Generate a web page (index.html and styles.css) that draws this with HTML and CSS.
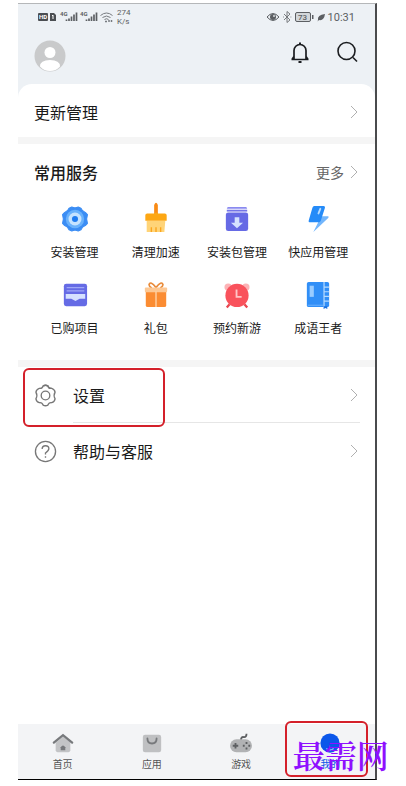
FILE: index.html
```
<!DOCTYPE html>
<html lang="zh-CN">
<head>
    <meta charset="UTF-8">
    <meta name="viewport" content="width=device-width, initial-scale=1.0">
    <title>我的</title>
    <link rel="stylesheet" href="styles.css">
</head>
<body>

<div class="phone">
    <header class="top">
        <div class="status">
            <div class="status-left">
                <svg width="79" height="16" viewBox="0 0 79 16">
                    <rect x="0" y="4" width="10" height="8" rx="1" fill="#4b4e52"/>
                    <text x="1" y="10" font-size="6" font-weight="700" fill="#fff">HD</text>
                    <path d="M12 4h4l2 2v6h-6z" fill="#4b4e52"/>
                    <path d="M14 7l1-1v4" fill="none" stroke="#fff"/>
                    <text x="22" y="7" font-size="6" font-weight="700" fill="#5c5f63">4G</text>
                    <path d="M28.5 12v-1.500M31 12V9.500M33.500 12V7.500M36 12V5.500M38.500 12V3.500" fill="none" stroke="#5c5f63" stroke-width="1.7"/>
                    <text x="42" y="7" font-size="6" font-weight="700" fill="#5c5f63">4G</text>
                    <path d="M48.500 12v-1.500M51 12V9.500M53.500 12V7.500M56 12V5.500M58.500 12V3.500" fill="none" stroke="#5c5f63" stroke-width="1.7"/>
                    <g fill="none" stroke="#777b80">
                        <path d="M62.5 6.500q6-5 12 0M64.500 8.500q4-3 8 0M66.500 10.500q2-1.500 4 0"/>
                        <path d="M67 12.500h2M71 11v2M73.500 11v2" stroke-width="1.5"/>
                    </g>
                </svg>
                <span class="speed">274<br>K/s</span>
            </div>
            <div class="status-right">
                <svg width="59" height="16" viewBox="0 0 59 16">
                    <path d="M0 8q6-7 12 0-6 7-12 0z" fill="none" stroke="#5c5f63"/>
                    <circle cx="6" cy="8" r="3" fill="#5c5f63"/>
                    <circle cx="7" cy="7" r="1" fill="#d8dcdf"/>
                    <path d="M17 5l6 6-3 2.500v-11L23 5l-6 6M16 8h.8M23.500 8h.8" fill="none" stroke="#6b6e72" stroke-width=".9"/>
                    <rect x="28.5" y="3.5" width="15" height="9" rx="1.5" fill="#d3d7da" stroke="#5c5f63"/>
                    <rect x="45" y="6" width="1.5" height="4" fill="#5c5f63"/>
                    <text x="31" y="11" font-size="8" font-weight="500" fill="#5c5f63">73</text>
                    <path d="M51 11q-1-5 7-6-1 7-6 6l-1.500 1.500" fill="#5c5f63"/>
                </svg>
                <span class="clock">10:31</span>
            </div>
        </div>
        <div class="account">
            <button class="avatar" aria-label="账号">
                <svg width="32" height="32" viewBox="0 0 32 32">
                    <circle cx="16" cy="16" r="15.5" fill="#c9cacb"/>
                    <circle cx="16" cy="12.5" r="5.5" fill="#fff"/>
                    <path d="M6 26.500q0-6.500 10-6.500t10 6.500q-4 4.500-10 4.500t-10-4.500z" fill="#fff"/>
                </svg>
            </button>
            <div class="tools">
                <button aria-label="消息">
                    <svg width="24" height="24" viewBox="0 0 24 24" fill="none" stroke="#1b1d20" stroke-width="1.7">
                        <path d="M3.500 19.500h17M6 19v-8.500a6 6 0 0 1 12 0V19M6 16.500l-2 3M18 16.500l2 3"/>
                        <path d="M12 4.500V2.500M10.500 22h3" stroke-width="2"/>
                    </svg>
                </button>
                <button aria-label="搜索">
                    <svg width="24" height="24" viewBox="0 0 24 24" fill="none" stroke="#1b1d20" stroke-width="1.6">
                        <circle cx="11.5" cy="11" r="8.5"/>
                        <path d="M18 17.500l4 4"/>
                    </svg>
                </button>
            </div>
        </div>
    </header>

    <main class="content">
        <a class="row update" href="#">
            <span>更新管理</span>
            <svg class="arrow" viewBox="0 0 8 14"><path d="M1 1l6 6-6 6"/></svg>
        </a>

        <section class="services">
            <div class="services-head">
                <h2>常用服务</h2>
                <a href="#">更多 <svg class="arrow" viewBox="0 0 8 14"><path d="M1 1l6 6-6 6"/></svg></a>
            </div>
            <div class="grid">
                <a href="#">
                    <svg viewBox="0 0 24 24">
                        <path d="M9 1Q12 2.500 15 1L17.500 2Q18.500 5 21.500 6L23.500 8Q22 12 23.500 16L21.500 18Q18.500 19 17.500 22L15 23Q12 21.500 9 23L6.500 22Q5.500 19 2.500 18L.5 16Q2 12 .5 8L2.500 6Q5.500 5 6.500 2Z" fill="#3b8df4" stroke="#3b8df4" stroke-linejoin="round"/>
                        <circle cx="12" cy="12" r="8.5" fill="#69b2fc"/>
                        <circle cx="12" cy="12" r="6" fill="#c5e3ff"/>
                        <circle cx="12" cy="12" r="2.8" fill="#1f7cf0"/>
                    </svg>
                    安装管理
                </a>
                <a href="#">
                    <svg viewBox="0 0 28 28">
                        <path d="M4 16h20l-1 12H4z" fill="#ffd478"/>
                        <path d="M9 28v-5M14 28v-5M19 28v-5" stroke="#fba51e" stroke-width="1.5"/>
                        <path d="M12 9V-1q2-5 4 0v10z" fill="#f98b16"/>
                        <path d="M4.500 8H12q2-2 4 0h7.500q2 0 2 2v6h-23v-6q0-2 2-2z" fill="#fda714"/>
                    </svg>
                    清理加速
                </a>
                <a href="#">
                    <svg viewBox="0 0 28 28">
                        <path d="M4 1h20l1 2H3z" fill="#8a8af0"/>
                        <path d="M3 4h22v2H3z" fill="#7475e8"/>
                        <rect x="2" y="7" width="24" height="20" rx="2.5" fill="#666ae5"/>
                        <path d="M11.500 12h5v6h4L14 24l-6.500-6h4z" fill="#d5e2ff"/>
                    </svg>
                    安装包管理
                </a>
                <a href="#">
                    <svg viewBox="0 0 28 28">
                        <path d="M16 11h9q1 .5 0 2L9 28l5-10z" fill="#73b6fc"/>
                        <path d="M10 0h10q2 0 1.500 2L17 16q-.5 1.500-2 1.500H5q-1.500 0-1-2L8 2q.5-2 2-2z" fill="#258bf8"/>
                        <path d="M16.500 3l-2 5" stroke="#b9dcff" stroke-width="2" stroke-linecap="round"/>
                    </svg>
                    快应用管理
                </a>
                <a href="#">
                    <svg viewBox="0 0 28 28">
                        <rect x="2" y="2" width="25" height="24" rx="2.5" fill="#656be5"/>
                        <path d="M5 6h19M5 9.500h19" stroke="#9fa7f7" stroke-width="1.5"/>
                        <path d="M4 13h21v5h-6l-4.500 2.500L10 18H4z" fill="#d5e1ff"/>
                    </svg>
                    已购项目
                </a>
                <a href="#">
                    <svg viewBox="0 0 28 28">
                        <path d="M14 6Q8-2 6.500 3q0 2 3 3.500M14 6q6-8 7.500-3 0 2-3 3.500" fill="none" stroke="#e98b3a" stroke-width="1.8"/>
                        <path d="M3 10h22v15q0 2-2 2H5q-2 0-2-2z" fill="#fb8c32"/>
                        <rect x="2" y="6" width="24" height="5" rx="1" fill="#fdc894"/>
                        <path d="M14 10v17" stroke="#ffd1a5" stroke-width="1.5"/>
                    </svg>
                    礼包
                </a>
                <a href="#">
                    <svg viewBox="0 0 28 28">
                        <circle cx="4.5" cy="5.5" r="4" fill="#fcb3b6"/>
                        <circle cx="23.5" cy="5.5" r="4" fill="#fcb3b6"/>
                        <path d="M6 24l-3 3.500M22 24l3 3.500" stroke="#e94850" stroke-width="2.5"/>
                        <circle cx="14" cy="14.5" r="12.5" fill="#f9525c"/>
                        <path d="M13.500 8v8H19" fill="none" stroke="#ffc5c7" stroke-width="2"/>
                    </svg>
                    预约新游
                </a>
                <a href="#">
                    <svg viewBox="0 0 28 28">
                        <rect x="2" y="0" width="24" height="27" rx="2" fill="#318ff7"/>
                        <path d="M20.500 0v27M21 5.500h5M21 10.500h5M21 15.500h5M21 20.500h5" stroke="#b6dbff" stroke-width="1.3"/>
                        <rect x="5" y="4" width="4.5" height="12" fill="#9accff"/>
                        <path d="M3 25h17" stroke="#72b6ff"/>
                        <path d="M20 26h4v3l-2-1-2 1z" fill="#186fe0"/>
                    </svg>
                    成语王者
                </a>
            </div>
        </section>

        <nav class="options">
            <a class="option marked" href="#">
                <svg class="option-icon" viewBox="0 0 24 24" stroke-width="1.4">
                    <path d="M9.500 2Q12 .5 14.500 2 15.500 5 18.500 4.500 21.500 5.500 22 8.500 20 12 22 15.500 21.500 18.500 18.500 19.500 15.500 19 14.500 22 12 23.500 9.500 22 8.500 19 5.500 19.500 2.500 18.500 2 15.500 4 12 2 8.500 2.500 5.500 5.500 4.500 8.500 5 9.500 2Z"/>
                    <path d="M9.500 2Q12 .5 14.500 2 15.500 5 18.500 4.500" />
                    <circle cx="12" cy="12" r="4.5"/>
                </svg>
                <span class="option-text line">设置 <svg class="arrow" viewBox="0 0 8 14"><path d="M1 1l6 6-6 6"/></svg></span>
            </a>
            <a class="option" href="#">
                <svg class="option-icon" viewBox="0 0 24 24" stroke-width="1.4">
                    <circle cx="12" cy="12" r="10.5"/>
                    <path d="M8.500 9.500Q8.500 6 12 6t3.500 3.200Q15.500 11 12 13.500V15M12 17v1.500"/>
                </svg>
                <span class="option-text">帮助与客服 <svg class="arrow" viewBox="0 0 8 14"><path d="M1 1l6 6-6 6"/></svg></span>
            </a>
        </nav>
    </main>

    <nav class="tabs">
        <a href="#">
            <svg viewBox="0 0 24 24">
                <path d="M5 11l7-6 8 6v9q0 2-2 2H6q-2 0-2-2v-8z" fill="#c3c4c6"/>
                <path d="M2 11.500L12 3.500l10 8" fill="none" stroke="#77797c" stroke-width="2.5" stroke-linecap="round"/>
                <path d="M9.500 20v-3.500q2.500-3.500 5 0V20z" fill="#77797c"/>
            </svg>
            首页
        </a>
        <a href="#">
            <svg viewBox="0 0 24 24">
                <rect x="2" y="3" width="20" height="19" rx="2.5" fill="#bfc0c2"/>
                <path d="M7 7q0 5.500 5 5.500T17 7" fill="none" stroke="#77797c" stroke-width="2" stroke-linecap="round"/>
            </svg>
            应用
        </a>
        <a href="#">
            <svg viewBox="0 0 24 24">
                <path d="M12 9q0-4 3-3.500T18 2" fill="none" stroke="#5d5f62" stroke-width="2"/>
                <rect x="0" y="8" width="24" height="14" rx="7" fill="#b1b2b4"/>
                <path d="M3 15h6M6 12v6" stroke="#5d5f62" stroke-width="2"/>
                <path d="M18 11v2M18 17v2M14 15h2M20 15h2" stroke="#5d5f62" stroke-width="2"/>
            </svg>
            游戏
        </a>
        <a class="active" href="#">
            <svg viewBox="0 0 24 24">
                <circle cx="12" cy="12" r="10.5" fill="#0b57ea"/>
                <path d="M8 18q4 3 8 0" fill="none" stroke="#8cb8ff" stroke-width="1.5"/>
            </svg>
            我的
            <span class="watermark">最需网</span>
        </a>
    </nav>
</div>

</body>
</html>
```

FILE: styles.css
```
*,
*::after {
    box-sizing: border-box;
}
body {
    margin: 0;
    background-color: #fff;
    font-family: "Noto Sans CJK SC", "Noto Sans", sans-serif;
    color: #1a1a1a;
}
a {
    color: inherit;
    text-decoration: none;
}
button {
    padding: 0;
    border: 0;
    background: none;
}
svg {
    display: block;
    flex-shrink: 0;
    overflow: visible;
}
.phone {
    display: flex;
    flex-direction: column;
    min-height: calc(100vh - 9px);
    margin: 3px 29px 6px 18px;
    border-top: 1px solid #b5b7b9;
    border-right: 2px solid #4a4b4d;
    border-bottom: 1px solid #000;
    background-color: #edf1f5;
}

/* barra de estado */
.status {
    display: flex;
    justify-content: space-between;
    align-items: center;
    height: 26px;
    padding: 0 20px;
    font-family: Roboto, sans-serif;
    color: #5c5f63;
}
.status-left,
.status-right {
    display: flex;
    align-items: center;
}
.status-right {
    gap: 2px;
}
.speed {
    font-size: 8px;
    line-height: 9px;
}
.clock {
    font-size: 11px;
}
.account {
    display: flex;
    justify-content: space-between;
    align-items: flex-start;
    height: 54px;
    padding: 10px 16px;
}
.tools {
    display: flex;
    gap: 23px;
}

/* contenido */
.content {
    flex: 1;
    border-radius: 14px 14px 0 0;
    background-color: #fff;
}
.arrow {
    width: 8px;
    height: 14px;
    fill: none;
    stroke: #b0b0b0;
    stroke-width: 1;
}
.row {
    display: flex;
    justify-content: space-between;
    align-items: center;
    height: 60px;
    padding: 2px 17px 0 16px;
    border-bottom: 7px solid #f5f5f5;
    font-size: 16px;
}
.services {
    height: 223px;
    padding: 16px 16px 0;
    border-bottom: 7px solid #f5f5f5;
}
.services-head {
    display: flex;
    justify-content: space-between;
    align-items: center;
    height: 24px;
    padding-right: 1px;
}
.services-head h2 {
    margin: 0;
    font-size: 16px;
    font-weight: 500;
}
.services-head a {
    display: flex;
    align-items: center;
    gap: 6px;
    font-size: 14px;
    color: #666;
}
.grid {
    display: grid;
    grid-template-columns: repeat(4, 1fr);
    grid-auto-rows: 76px;
    padding-top: 22px;
}
.grid a {
    display: flex;
    flex-direction: column;
    align-items: center;
    gap: 10px;
    font-size: 12px;
    line-height: 20px;
    white-space: nowrap;
}
.grid svg {
    width: 26px;
    height: 26px;
}
.option {
    position: relative;
    display: flex;
    align-items: center;
    gap: 16px;
    height: 56px;
    padding: 0 15px 0 16px;
    font-size: 16px;
}
.option-icon {
    width: 23px;
    height: 23px;
    fill: none;
    stroke: #777;
}
.option-text {
    display: flex;
    flex: 1;
    justify-content: space-between;
    align-items: center;
    height: 56px;
    padding-right: 2px;
}
.line {
    border-bottom: 1px solid #e6e6e6;
}
.marked::after,
.active::after {
    content: "";
    position: absolute;
    border: 2px solid #d4202a;
    border-radius: 6px;
}
.marked::after {
    top: 1px;
    left: 5px;
    width: 142px;
    height: 59px;
}

/* menu inferior */
.tabs {
    display: grid;
    grid-template-columns: repeat(4, 1fr);
    height: 55px;
    background-color: #f3f4f6;
}
.tabs a {
    position: relative;
    display: flex;
    flex-direction: column;
    align-items: center;
    gap: 2px;
    padding-top: 8px;
    font-size: 10px;
    line-height: 16px;
    color: #555;
}
.tabs svg {
    width: 22px;
    height: 22px;
}
.tabs .active {
    color: #0b57ea;
}
.active::after {
    top: -3px;
    left: -1px;
    width: 83px;
    height: 56px;
}
.watermark {
    position: absolute;
    z-index: 1;
    top: 12px;
    left: 7px;
    font-family: "Noto Serif CJK SC", "Noto Sans CJK SC", serif;
    font-size: 32px;
    font-weight: 600;
    line-height: 36px;
    white-space: nowrap;
    color: #8f10ff;
}
```
